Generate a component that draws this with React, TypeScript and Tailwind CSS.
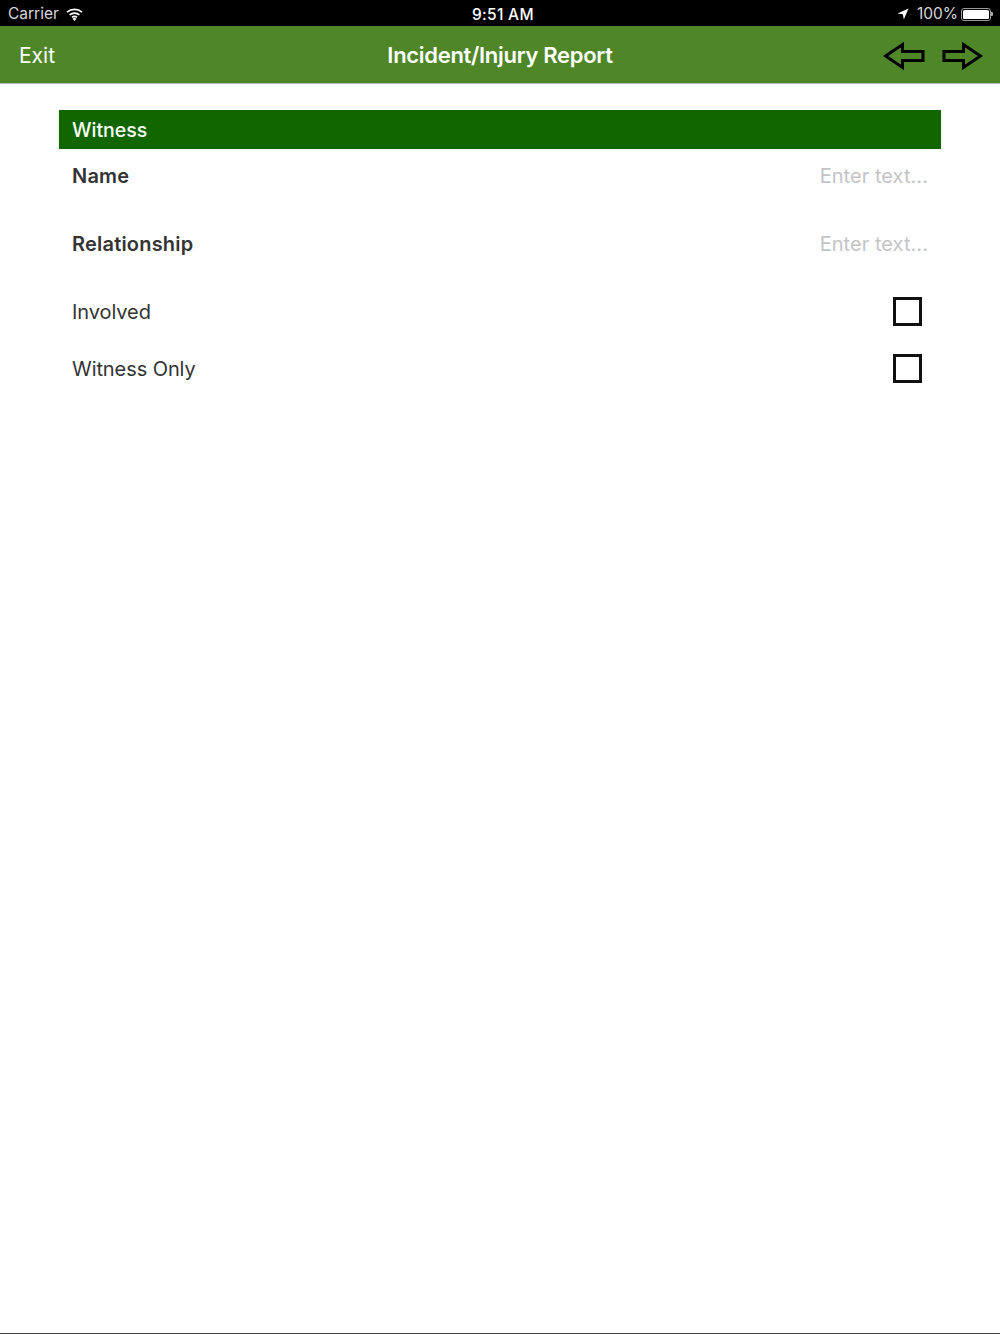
import React from 'react';

const font = 'font-["Inter","Liberation_Sans",sans-serif]';

const WifiIcon = () => (
  <svg width="17" height="13" viewBox="0 0 16 12" fill="none" stroke="white" strokeWidth="1.7">
    <path d="M1 3.8C5 0.4 11 0.4 15 3.8" />
    <path d="M3.4 6.3C6 4.1 10 4.1 12.6 6.3" />
    <path d="M5.7 8.6C7 7.6 9 7.6 10.3 8.6" />
    <path d="M8 11.8L6.4 10L8 9.2L9.6 10Z" fill="white" strokeWidth="0.5" />
  </svg>
);

const LocationIcon = () => (
  <svg width="12" height="12" viewBox="0 0 12 12" fill="white">
    <path d="M11.5 0.5L0.5 5.6L5.8 6.2L6.8 11.5Z" />
  </svg>
);

const Battery = () => (
  <div className="flex items-center">
    <div className="w-[30px] h-[13px] rounded-[3px] border border-[#999] p-[1px] flex">
      <div className="flex-1 bg-white rounded-[1.5px]" />
    </div>
    <div className="w-[2px] h-[4px] bg-[#aaa] rounded-r-[1px]" />
  </div>
);

const ArrowLeft = () => (
  <svg width="42" height="30" viewBox="0 0 42 30" fill="none" stroke="black" strokeWidth="3">
    <path d="M2.5 15L19.5 3.5V10.5H40V19.5H19.5V26.5Z" />
  </svg>
);

const ArrowRight = () => (
  <svg width="42" height="30" viewBox="0 0 42 30" fill="none" stroke="black" strokeWidth="3">
    <path d="M39.5 15L22.5 3.5V10.5H3V19.5H22.5V26.5Z" />
  </svg>
);

const TextRow = ({ label, last }: { label: string; last?: boolean }) => (
  <div className={`flex items-center justify-between h-[54px] pl-[13px] pr-[13px] ${last ? 'mb-[12px]' : 'mb-[14px]'}`}>
    <span className="text-[20px] font-semibold text-[#333] tracking-[0.2px]">{label}</span>
    <span className="text-[20px] text-[#c4c4c6] tracking-[0.05px]">Enter text...</span>
  </div>
);

const CheckRow = ({ label }: { label: string }) => (
  <div className="flex items-center justify-between h-[57px] pl-[13px] pr-[19px]">
    <span className="text-[20px] text-[#333] tracking-[-0.08px]">{label}</span>
    <div className="w-[29px] h-[29px] border-[3px] border-[#111]" />
  </div>
);

export default function App() {
  return (
    <div className={`h-[1334px] bg-white flex flex-col ${font}`}>
      {/* status bar */}
      <div className="h-[26px] bg-black text-white flex items-center justify-between pl-[8px] pr-[7px] pt-[2px] text-[15.5px] relative">
        <div className="flex items-center gap-[7px] text-[#d8d8d8]">
          <span>Carrier</span>
          <WifiIcon />
        </div>
        <div className="absolute left-[472px] top-[3px] font-medium text-[15.5px] tracking-[0.3px]">9:51 AM</div>
        <div className="flex items-center gap-[3px] text-[#d8d8d8]">
          <div className="mr-[5px]">
            <LocationIcon />
          </div>
          <span>100%</span>
          <Battery />
        </div>
      </div>

      {/* nav bar */}
      <div className="h-[58px] bg-[#4e8628] border-b border-[#b8b8b8] flex items-center justify-between pl-[19px] pr-[17px] pt-[2px] relative">
        <span className="text-[21px] text-white">Exit</span>
        <span className="absolute inset-x-0 text-center text-[22px] font-semibold text-white tracking-[-0.3px]">Incident/Injury Report</span>
        <div className="flex items-center gap-[16px]">
          <ArrowLeft />
          <ArrowRight />
        </div>
      </div>

      {/* form */}
      <div className="flex-1 flex flex-col pt-[26px] px-[59px]">
        <div className="h-[39px] bg-[#116600] flex items-center pl-[13px] pt-[2px] text-[19.5px] font-medium text-white">Witness</div>
        <TextRow label="Name" />
        <TextRow label="Relationship" last />
        <CheckRow label="Involved" />
        <CheckRow label="Witness Only" />
      </div>

      <div className="h-[1px] bg-[#444]" />
    </div>
  );
}
